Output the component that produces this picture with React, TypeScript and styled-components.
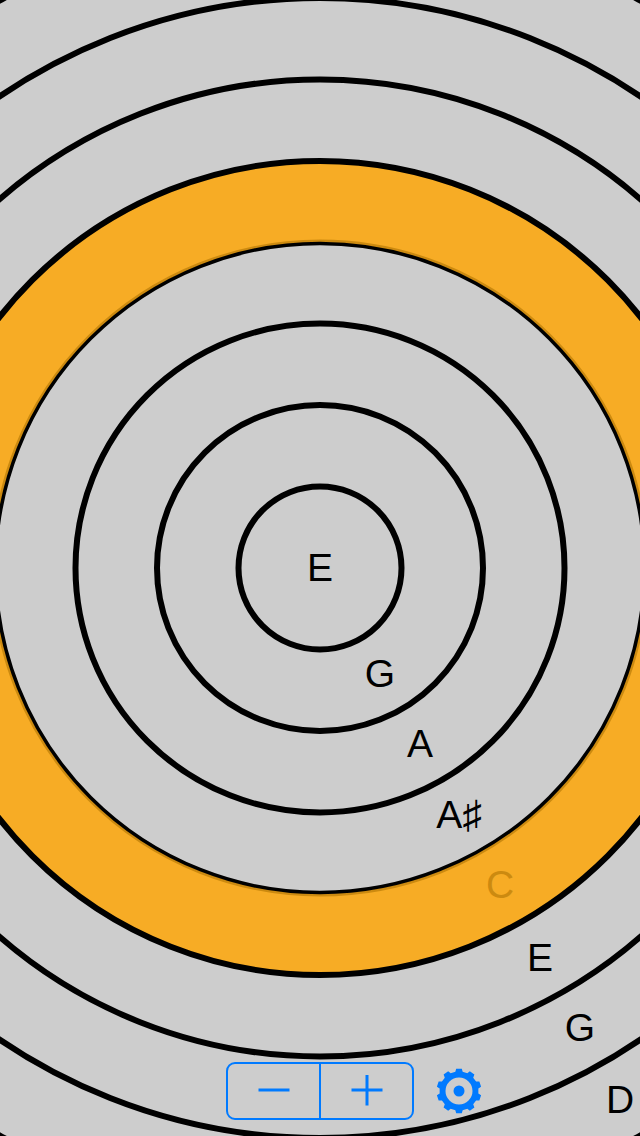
import { FunctionComponent } from "react";
import { createGlobalStyle, styled } from "styled-components";

const CENTER_X = 320;
const CENTER_Y = 568;

const RING_RADII = [81.5, 163, 244.5, 407, 488.5, 570, 651.5];

const NOTES = [
  { name: "E", x: 320, y: 567 },
  { name: "G", x: 380, y: 673 },
  { name: "A", x: 420, y: 743 },
  { name: "A♯", x: 459, y: 814 },
  { name: "C", x: 500, y: 884, active: true },
  { name: "E", x: 540, y: 957 },
  { name: "G", x: 580, y: 1027 },
  { name: "D", x: 620, y: 1099 },
];

const gearPath = () => {
  const teeth = 10;
  const outer = 22.5;
  const root = 19.5;
  const step = (Math.PI * 2) / teeth;
  let d = "";
  for (let i = 0; i < teeth; i++) {
    const a = i * step - Math.PI / 2;
    const pts: [number, number][] = [
      [root, a - step * 0.3],
      [outer, a - step * 0.2],
      [outer, a + step * 0.2],
      [root, a + step * 0.3],
    ];
    pts.forEach(([r, t]) => {
      const x = (24 + r * Math.cos(t)).toFixed(2);
      const y = (24 + r * Math.sin(t)).toFixed(2);
      d += `${d ? "L" : "M"}${x} ${y} `;
    });
  }
  return `${d}Z M24 10.5 A13.5 13.5 0 1 0 24 37.5 A13.5 13.5 0 1 0 24 10.5 Z`;
};

const Tuner: FunctionComponent = () => (
  <Rings viewBox="0 0 640 1136">
    <circle cx={CENTER_X} cy={CENTER_Y} r={367} fill="none" stroke="#f7ac25" strokeWidth={82} />
    <circle cx={CENTER_X} cy={CENTER_Y} r={327} fill="none" stroke="#cc8a10" strokeWidth={3} />
    <circle cx={CENTER_X} cy={CENTER_Y} r={324.5} fill="none" stroke="#000" strokeWidth={3.5} />
    {RING_RADII.map((radius) => (
      <circle
        key={radius}
        cx={CENTER_X}
        cy={CENTER_Y}
        r={radius}
        fill="none"
        stroke="#000"
        strokeWidth={6}
      />
    ))}
  </Rings>
);

export default function App() {
  return (
    <>
      <GlobalStyle />
      <Screen>
        <Tuner />
        {NOTES.map((note) => (
          <Note
            key={`${note.name}-${note.y}`}
            $active={note.active}
            style={{ left: note.x, top: note.y }}
          >
            {note.name}
          </Note>
        ))}
        <Toolbar>
          <Stepper>
            <StepButton aria-label="minus">
              <svg width="32" height="32" viewBox="0 0 32 32">
                <path d="M0.5 15H31.5" stroke="currentColor" strokeWidth="3" />
              </svg>
            </StepButton>
            <StepButton aria-label="plus">
              <svg width="32" height="32" viewBox="0 0 32 32">
                <path d="M0.5 15H31.5M16 -0.5V30.5" stroke="currentColor" strokeWidth="3" />
              </svg>
            </StepButton>
          </Stepper>
          <Gear aria-label="settings">
            <svg width="48" height="48" viewBox="0 0 48 48">
              <path d={gearPath()} fill="currentColor" fillRule="evenodd" />
              <circle cx="24" cy="24" r="5.5" fill="currentColor" />
            </svg>
          </Gear>
        </Toolbar>
      </Screen>
    </>
  );
}

const GlobalStyle = createGlobalStyle`
  html, body {
    margin: 0;
    padding: 0;
    background: #cdcdcd;
  }
`;

const Screen = styled.div`
  position: relative;
  width: 640px;
  height: 1136px;
  overflow: hidden;
  background: #cdcdcd;
  font-family: "Liberation Sans", Arial, sans-serif;
`;

const Rings = styled.svg`
  display: block;
  width: 640px;
  height: 1136px;
`;

const Note = styled.span<{ $active?: boolean }>`
  position: absolute;
  transform: translate(-50%, -50%);
  font-size: 39px;
  line-height: 1;
  color: ${(props) => (props.$active ? "#cc8a10" : "#000")};
`;

const Toolbar = styled.div`
  position: absolute;
  left: 226px;
  top: 1062px;
  display: flex;
  align-items: center;
  gap: 21px;
`;

const Stepper = styled.div`
  display: flex;
  width: 188px;
  height: 58px;
  box-sizing: border-box;
  border: 2px solid #007aff;
  border-radius: 9px;
`;

const StepButton = styled.button`
  flex: 1;
  display: flex;
  align-items: center;
  justify-content: center;
  padding: 0;
  border: none;
  background: none;
  color: #007aff;

  & + & {
    border-left: 2px solid #007aff;
  }
`;

const Gear = styled.button`
  display: flex;
  padding: 0;
  border: none;
  background: none;
  color: #007aff;
`;
